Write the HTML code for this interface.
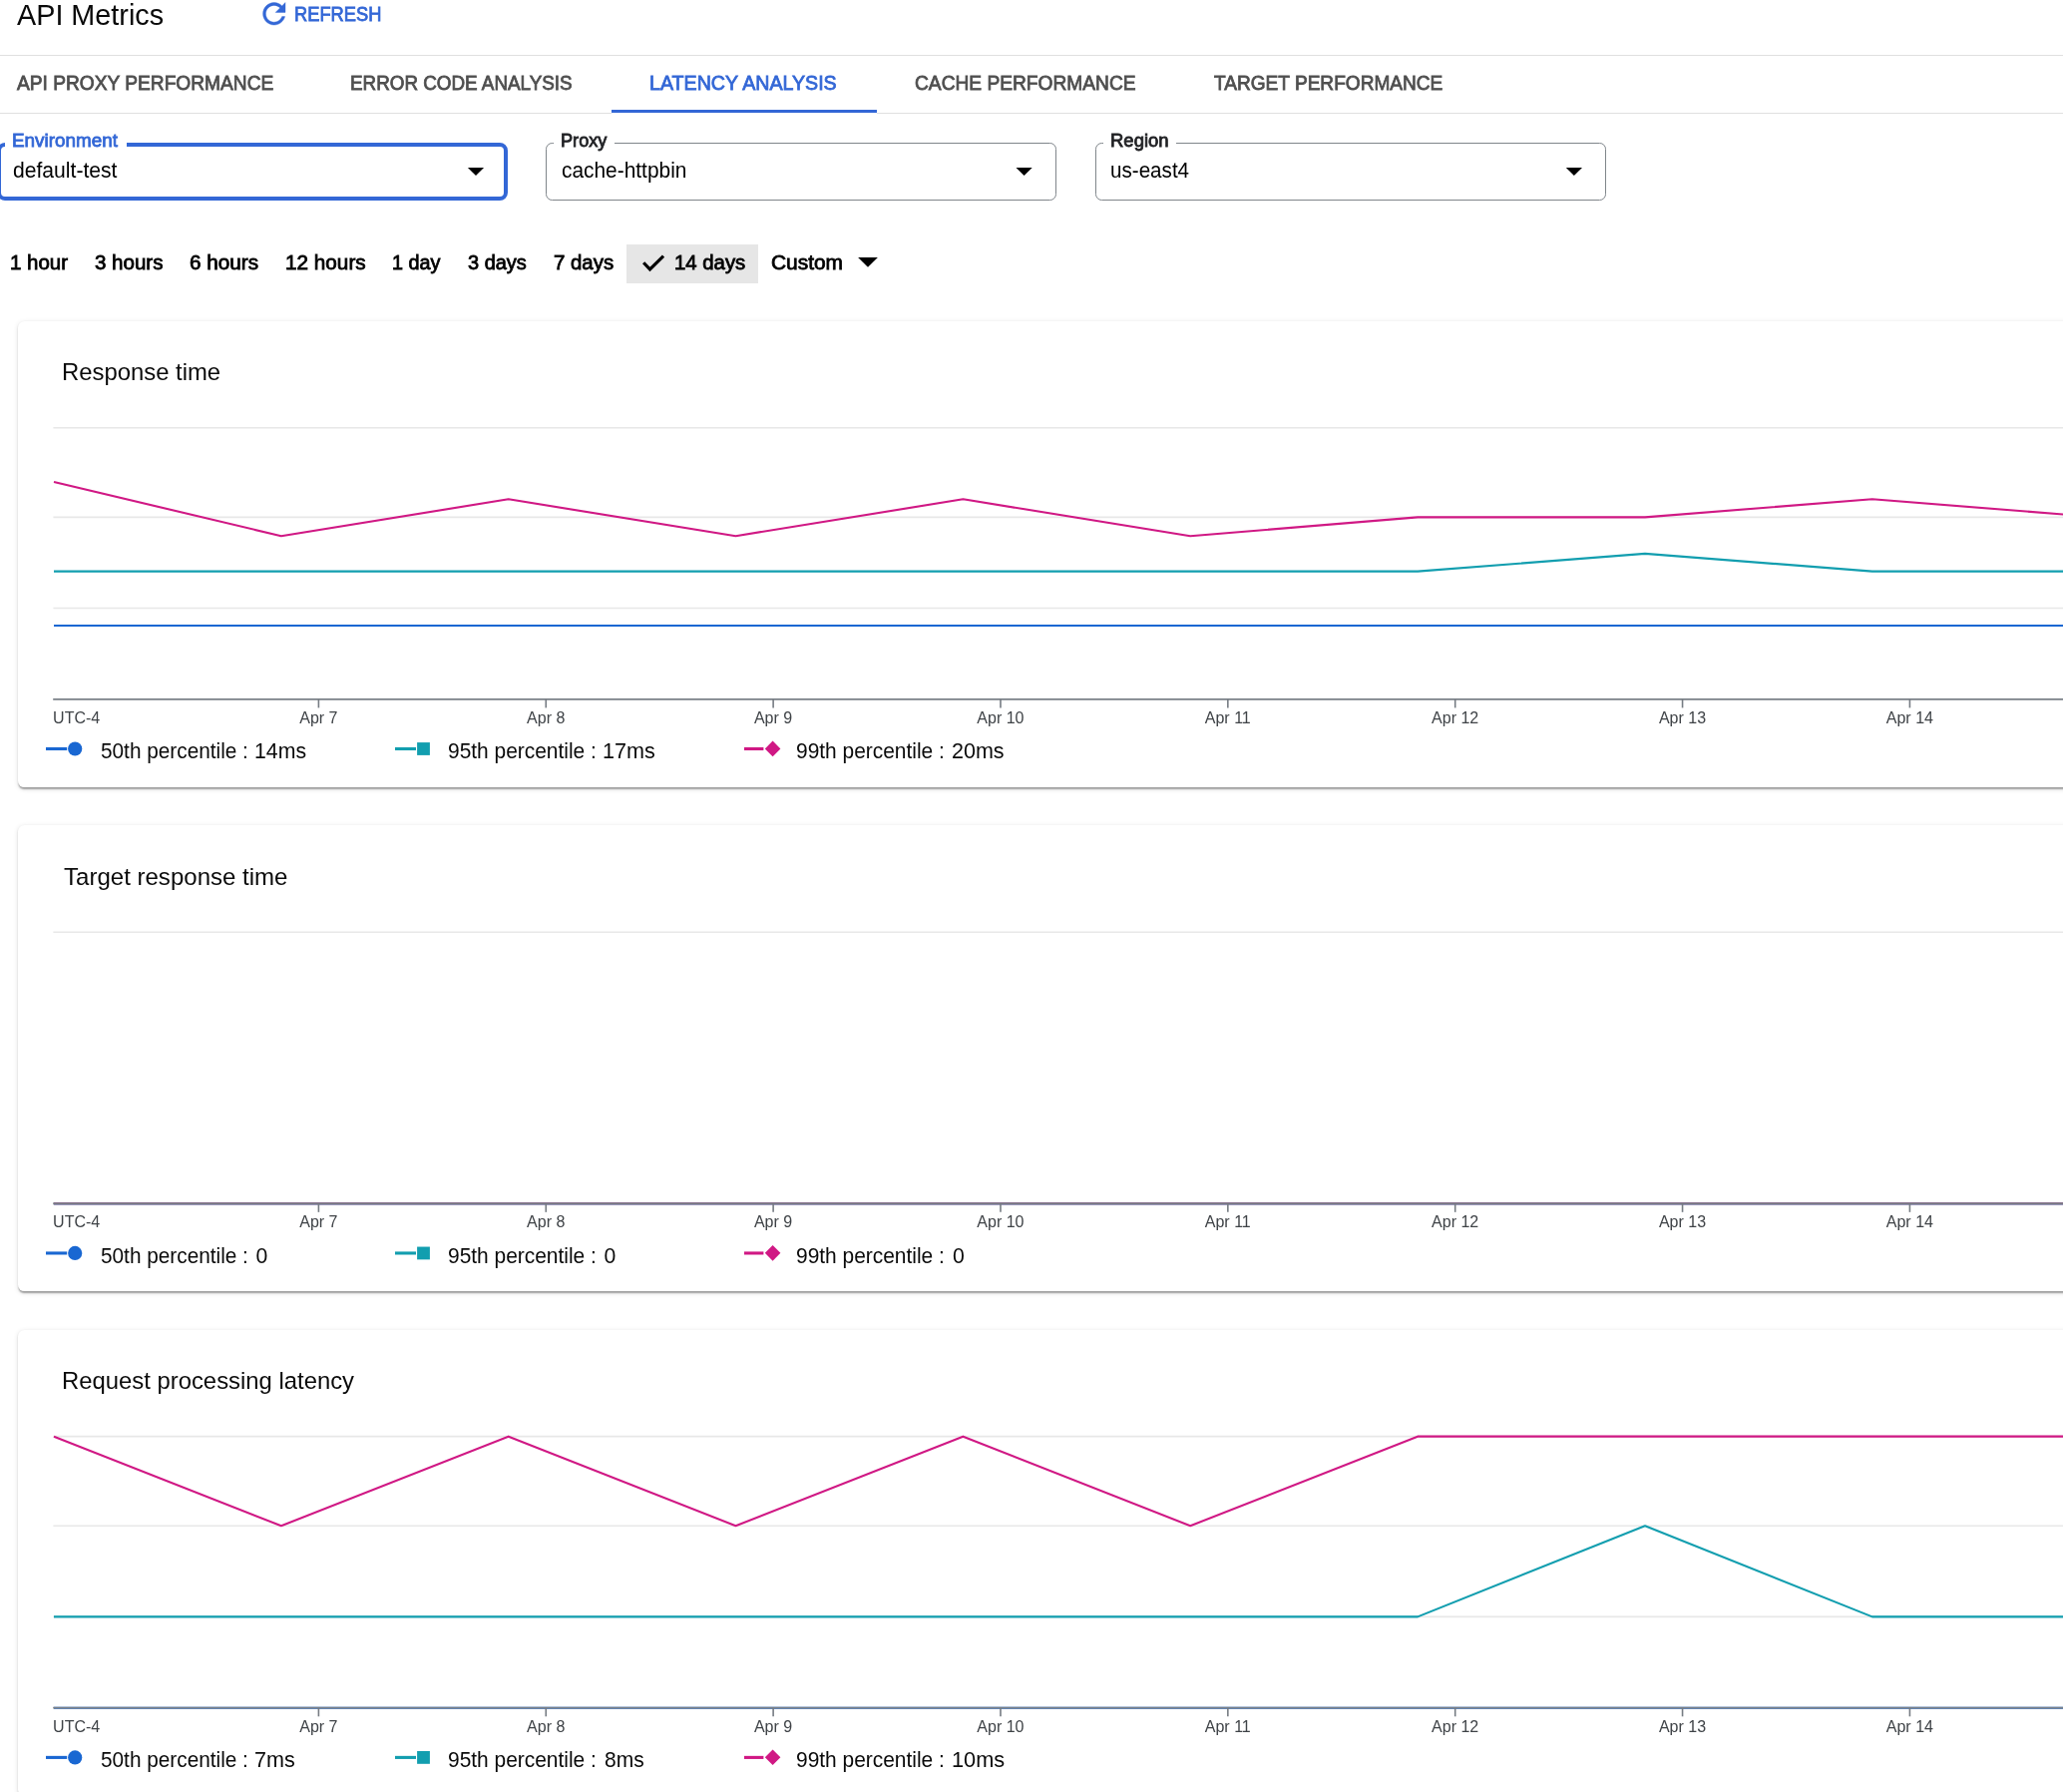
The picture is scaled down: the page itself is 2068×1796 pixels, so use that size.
<!DOCTYPE html>
<html lang="en"><head><meta charset="utf-8"><title>API Metrics</title>
<style>
html,body{margin:0;padding:0;background:#fff}
body{width:2068px;height:1796px;position:relative;overflow:hidden;font-family:"Liberation Sans",sans-serif}
.t{position:absolute;white-space:pre;line-height:1;transform-origin:0 0;display:block}
.txt{position:absolute;left:0;top:0;width:2068px;height:1796px;will-change:transform}
.m{-webkit-text-stroke:0.8px currentColor}
.hr{position:absolute;left:0;width:2068px;height:1px;background:#e0e0e0}
.ind{position:absolute;left:613px;width:266px;top:110px;height:3px;background:#3367d6;border-bottom:1px solid #fff}
.field{position:absolute;top:143px;height:58px;width:512px;box-sizing:border-box;border:1px solid #80868b;border-radius:6.4px}
.field.focus{border:4px solid #3367d6;border-radius:8px}
.notch{position:absolute;top:141px;height:8px;background:#fff}
.sel{position:absolute;left:628px;top:245px;width:132px;height:39px;background:#e6e6e6}
.card{position:absolute;left:18px;width:2080px;height:467px;background:#fff;border-radius:6.4px;box-shadow:0 3.2px 1.6px -1.6px rgba(0,0,0,.2),0 1.6px 1.6px 0 rgba(0,0,0,.14),0 1.6px 4.8px 0 rgba(0,0,0,.12);margin:0}
.chart{position:absolute;left:0;top:0;overflow:visible}
svg{display:block}
.ov{position:absolute;left:0;top:0;overflow:visible;pointer-events:none}
</style></head><body>
<header>
<div class="hr" style="top:55px"></div>
<svg style="position:absolute;left:257.75px;top:-2.9px" width="33.6" height="33.6" viewBox="0 0 24 24"><path fill="#3367d6" stroke="#3367d6" stroke-width="0.3" d="M17.65 6.35C16.2 4.9 14.21 4 12 4c-4.42 0-7.99 3.58-7.99 8s3.57 8 7.99 8c3.73 0 6.84-2.55 7.73-6h-2.08c-.82 2.33-3.04 4-5.65 4-3.31 0-6-2.69-6-6s2.69-6 6-6c1.66 0 3.14.69 4.22 1.78L13 11h7V4l-2.35 2.35z"/></svg>
</header>
<nav>
<div class="hr" style="top:113px"></div>
<div class="ind"></div>
</nav>
<div class="field focus" style="left:-3px"></div>
<div class="field" style="left:547px"></div>
<div class="field" style="left:1098px"></div>
<div class="notch" style="left:5px;width:122px"></div>
<div class="notch" style="left:555px;width:61px"></div>
<div class="notch" style="left:1106px;width:73px"></div>
<div class="sel"></div>
<svg class="ov" width="2068" height="300" viewBox="0 0 2068 300">
<path d="M468.9 168.0H485.1L477.00 176.0Z" fill="#000"/>
<path d="M1018.5 168.0H1034.7L1026.60 176.0Z" fill="#000"/>
<path d="M1569.8 168.0H1586.0L1577.90 176.0Z" fill="#000"/>
<path d="M860.1 258.0H879.9L870.00 267.7Z" fill="#000"/>
<path d="M645.15 263.25L651.5 269.9L665.05 256.6" fill="none" stroke="#000" stroke-width="3.15" stroke-miterlimit="10"/>
</svg>
<section class="card" style="top:322.00px"></section>
<section class="card" style="top:827.45px"></section>
<section class="card" style="top:1332.90px"></section>
<svg class="ov" width="2068" height="1796" viewBox="0 0 2068 1796">
<line x1="53.4" x2="2080.0" y1="428.75" y2="428.75" stroke="#e8e8e8" stroke-width="1.6"/>
<line x1="53.4" x2="2080.0" y1="518.35" y2="518.35" stroke="#e8e8e8" stroke-width="1.6"/>
<line x1="53.4" x2="2080.0" y1="609.45" y2="609.45" stroke="#e8e8e8" stroke-width="1.6"/>
<polyline points="54.0,627.00 281.9,627.00 509.7,627.00 737.5,627.00 965.4,627.00 1193.2,627.00 1421.1,627.00 1649.0,627.00 1876.8,627.00 2104.7,627.00" fill="none" stroke="#1967d2" stroke-width="2.1" stroke-linejoin="round"/>
<polyline points="54.0,572.60 281.9,572.60 509.7,572.60 737.5,572.60 965.4,572.60 1193.2,572.60 1421.1,572.60 1649.0,554.90 1876.8,572.60 2104.7,572.60" fill="none" stroke="#129eaf" stroke-width="2.1" stroke-linejoin="round"/>
<polyline points="54.0,483.00 281.9,537.20 509.7,500.30 737.5,537.20 965.4,500.30 1193.2,537.20 1421.1,518.40 1649.0,518.40 1876.8,500.30 2104.7,518.40" fill="none" stroke="#d01884" stroke-width="2.1" stroke-linejoin="round"/>
<line x1="53.2" x2="2080.0" y1="700.80" y2="700.80" stroke="#7a8087" stroke-width="1.8"/>
<line x1="319.40" x2="319.40" y1="700.80" y2="709.40" stroke="#767c83" stroke-width="1.6"/>
<line x1="547.26" x2="547.26" y1="700.80" y2="709.40" stroke="#767c83" stroke-width="1.6"/>
<line x1="775.12" x2="775.12" y1="700.80" y2="709.40" stroke="#767c83" stroke-width="1.6"/>
<line x1="1002.98" x2="1002.98" y1="700.80" y2="709.40" stroke="#767c83" stroke-width="1.6"/>
<line x1="1230.84" x2="1230.84" y1="700.80" y2="709.40" stroke="#767c83" stroke-width="1.6"/>
<line x1="1458.70" x2="1458.70" y1="700.80" y2="709.40" stroke="#767c83" stroke-width="1.6"/>
<line x1="1686.56" x2="1686.56" y1="700.80" y2="709.40" stroke="#767c83" stroke-width="1.6"/>
<line x1="1914.42" x2="1914.42" y1="700.80" y2="709.40" stroke="#767c83" stroke-width="1.6"/>
<line x1="46.0" x2="67.2" y1="750.50" y2="750.50" stroke="#1967d2" stroke-width="3.1"/>
<circle cx="75.2" cy="750.50" r="7.1" fill="#1967d2"/>
<line x1="396.0" x2="417.0" y1="750.50" y2="750.50" stroke="#129eaf" stroke-width="3.1"/>
<rect x="418.1" y="744.10" width="12.8" height="12.8" fill="#129eaf"/>
<line x1="746.0" x2="765.4" y1="750.50" y2="750.50" stroke="#d01884" stroke-width="3.1"/>
<path d="M766.80 750.40L774.60 742.60L782.40 750.40L774.60 758.20Z" fill="#d01884"/>
<line x1="53.4" x2="2080.0" y1="934.20" y2="934.20" stroke="#e8e8e8" stroke-width="1.6"/>
<polyline points="54.0,1206.25 281.9,1206.25 509.7,1206.25 737.5,1206.25 965.4,1206.25 1193.2,1206.25 1421.1,1206.25 1649.0,1206.25 1876.8,1206.25 2104.7,1206.25" fill="none" stroke="#1967d2" stroke-width="2.1" stroke-linejoin="round"/>
<polyline points="54.0,1206.25 281.9,1206.25 509.7,1206.25 737.5,1206.25 965.4,1206.25 1193.2,1206.25 1421.1,1206.25 1649.0,1206.25 1876.8,1206.25 2104.7,1206.25" fill="none" stroke="#129eaf" stroke-width="2.1" stroke-linejoin="round"/>
<polyline points="54.0,1206.25 281.9,1206.25 509.7,1206.25 737.5,1206.25 965.4,1206.25 1193.2,1206.25 1421.1,1206.25 1649.0,1206.25 1876.8,1206.25 2104.7,1206.25" fill="none" stroke="#d01884" stroke-width="2.1" stroke-linejoin="round"/>
<line x1="53.2" x2="2080.0" y1="1206.25" y2="1206.25" stroke="#7a8087" stroke-width="1.8"/>
<line x1="319.40" x2="319.40" y1="1206.25" y2="1214.85" stroke="#767c83" stroke-width="1.6"/>
<line x1="547.26" x2="547.26" y1="1206.25" y2="1214.85" stroke="#767c83" stroke-width="1.6"/>
<line x1="775.12" x2="775.12" y1="1206.25" y2="1214.85" stroke="#767c83" stroke-width="1.6"/>
<line x1="1002.98" x2="1002.98" y1="1206.25" y2="1214.85" stroke="#767c83" stroke-width="1.6"/>
<line x1="1230.84" x2="1230.84" y1="1206.25" y2="1214.85" stroke="#767c83" stroke-width="1.6"/>
<line x1="1458.70" x2="1458.70" y1="1206.25" y2="1214.85" stroke="#767c83" stroke-width="1.6"/>
<line x1="1686.56" x2="1686.56" y1="1206.25" y2="1214.85" stroke="#767c83" stroke-width="1.6"/>
<line x1="1914.42" x2="1914.42" y1="1206.25" y2="1214.85" stroke="#767c83" stroke-width="1.6"/>
<line x1="46.0" x2="67.2" y1="1255.95" y2="1255.95" stroke="#1967d2" stroke-width="3.1"/>
<circle cx="75.2" cy="1255.95" r="7.1" fill="#1967d2"/>
<line x1="396.0" x2="417.0" y1="1255.95" y2="1255.95" stroke="#129eaf" stroke-width="3.1"/>
<rect x="418.1" y="1249.55" width="12.8" height="12.8" fill="#129eaf"/>
<line x1="746.0" x2="765.4" y1="1255.95" y2="1255.95" stroke="#d01884" stroke-width="3.1"/>
<path d="M766.80 1255.85L774.60 1248.05L782.40 1255.85L774.60 1263.65Z" fill="#d01884"/>
<line x1="53.4" x2="2080.0" y1="1439.65" y2="1439.65" stroke="#e8e8e8" stroke-width="1.6"/>
<line x1="53.4" x2="2080.0" y1="1529.25" y2="1529.25" stroke="#e8e8e8" stroke-width="1.6"/>
<line x1="53.4" x2="2080.0" y1="1620.35" y2="1620.35" stroke="#e8e8e8" stroke-width="1.6"/>
<polyline points="54.0,1711.70 281.9,1711.70 509.7,1711.70 737.5,1711.70 965.4,1711.70 1193.2,1711.70 1421.1,1711.70 1649.0,1711.70 1876.8,1711.70 2104.7,1711.70" fill="none" stroke="#1967d2" stroke-width="2.1" stroke-linejoin="round"/>
<polyline points="54.0,1620.35 281.9,1620.35 509.7,1620.35 737.5,1620.35 965.4,1620.35 1193.2,1620.35 1421.1,1620.35 1649.0,1529.25 1876.8,1620.35 2104.7,1620.35" fill="none" stroke="#129eaf" stroke-width="2.1" stroke-linejoin="round"/>
<polyline points="54.0,1439.65 281.9,1529.25 509.7,1439.65 737.5,1529.25 965.4,1439.65 1193.2,1529.25 1421.1,1439.65 1649.0,1439.65 1876.8,1439.65 2104.7,1439.65" fill="none" stroke="#d01884" stroke-width="2.1" stroke-linejoin="round"/>
<line x1="53.2" x2="2080.0" y1="1711.70" y2="1711.70" stroke="#7a8087" stroke-width="1.8"/>
<line x1="319.40" x2="319.40" y1="1711.70" y2="1720.30" stroke="#767c83" stroke-width="1.6"/>
<line x1="547.26" x2="547.26" y1="1711.70" y2="1720.30" stroke="#767c83" stroke-width="1.6"/>
<line x1="775.12" x2="775.12" y1="1711.70" y2="1720.30" stroke="#767c83" stroke-width="1.6"/>
<line x1="1002.98" x2="1002.98" y1="1711.70" y2="1720.30" stroke="#767c83" stroke-width="1.6"/>
<line x1="1230.84" x2="1230.84" y1="1711.70" y2="1720.30" stroke="#767c83" stroke-width="1.6"/>
<line x1="1458.70" x2="1458.70" y1="1711.70" y2="1720.30" stroke="#767c83" stroke-width="1.6"/>
<line x1="1686.56" x2="1686.56" y1="1711.70" y2="1720.30" stroke="#767c83" stroke-width="1.6"/>
<line x1="1914.42" x2="1914.42" y1="1711.70" y2="1720.30" stroke="#767c83" stroke-width="1.6"/>
<line x1="46.0" x2="67.2" y1="1761.40" y2="1761.40" stroke="#1967d2" stroke-width="3.1"/>
<circle cx="75.2" cy="1761.40" r="7.1" fill="#1967d2"/>
<line x1="396.0" x2="417.0" y1="1761.40" y2="1761.40" stroke="#129eaf" stroke-width="3.1"/>
<rect x="418.1" y="1755.00" width="12.8" height="12.8" fill="#129eaf"/>
<line x1="746.0" x2="765.4" y1="1761.40" y2="1761.40" stroke="#d01884" stroke-width="3.1"/>
<path d="M766.80 1761.30L774.60 1753.50L782.40 1761.30L774.60 1769.10Z" fill="#d01884"/>
</svg>
<div class="txt">
<span class="t" style="left:17.10px;top:0px;font-size:29.38px;color:#0a0a0a;transform:scaleX(0.9794)">API Metrics</span>
<span class="t m" style="left:294.90px;top:4px;font-size:20.28px;color:#3367d6;transform:scaleX(0.9023)">REFRESH</span>
<span class="t m" style="left:16.90px;top:73px;font-size:20.28px;color:#4f4f4f;transform:scaleX(0.9453)">API PROXY PERFORMANCE</span>
<span class="t m" style="left:351.17px;top:73px;font-size:20.28px;color:#4f4f4f;transform:scaleX(0.9293)">ERROR CODE ANALYSIS</span>
<span class="t m" style="left:651.43px;top:73px;font-size:20.28px;color:#3367d6;transform:scaleX(0.9690)">LATENCY ANALYSIS</span>
<span class="t m" style="left:917.45px;top:73px;font-size:20.28px;color:#4f4f4f;transform:scaleX(0.9459)">CACHE PERFORMANCE</span>
<span class="t m" style="left:1216.90px;top:73px;font-size:20.28px;color:#4f4f4f;transform:scaleX(0.9415)">TARGET PERFORMANCE</span>
<span class="t m" style="left:11.99px;top:132px;font-size:18.72px;color:#3367d6;transform:scaleX(1.0086)">Environment</span>
<span class="t" style="left:13.20px;top:160px;font-size:21.22px;color:#000;transform:scaleX(0.9954)">default-test</span>
<span class="t m" style="left:562.13px;top:132px;font-size:18.72px;color:#202124;transform:scaleX(0.9714)">Proxy</span>
<span class="t" style="left:563.10px;top:160px;font-size:21.22px;color:#000;transform:scaleX(0.9842)">cache-httpbin</span>
<span class="t m" style="left:1113.11px;top:132px;font-size:18.72px;color:#202124;transform:scaleX(0.9885)">Region</span>
<span class="t" style="left:1113.43px;top:160px;font-size:21.22px;color:#000;transform:scaleX(0.9717)">us-east4</span>
<span class="t m" style="left:10.09px;top:253px;font-size:20.28px;color:#000;transform:scaleX(1.0086)">1 hour</span>
<span class="t m" style="left:95.20px;top:253px;font-size:20.28px;color:#000;transform:scaleX(1.0124)">3 hours</span>
<span class="t m" style="left:189.98px;top:253px;font-size:20.28px;color:#000;transform:scaleX(1.0216)">6 hours</span>
<span class="t m" style="left:285.88px;top:253px;font-size:20.28px;color:#000;transform:scaleX(1.0227)">12 hours</span>
<span class="t m" style="left:392.92px;top:253px;font-size:20.28px;color:#000;transform:scaleX(0.9769)">1 day</span>
<span class="t m" style="left:469.40px;top:253px;font-size:20.28px;color:#000;transform:scaleX(0.9853)">3 days</span>
<span class="t m" style="left:554.59px;top:253px;font-size:20.28px;color:#000;transform:scaleX(1.0072)">7 days</span>
<span class="t m" style="left:675.70px;top:253px;font-size:20.28px;color:#000;transform:scaleX(1.0036)">14 days</span>
<span class="t m" style="left:773.07px;top:253px;font-size:20.28px;color:#000;transform:scaleX(1.0318)">Custom</span>
<span class="t" style="left:61.65px;top:361px;font-size:24.48px;color:#0a0a0a;transform:scaleX(0.9751)">Response time</span>
<span class="t" style="left:53.10px;top:712px;font-size:16.0px;color:#3f4347">UTC-4</span>
<span class="t" style="left:300.23px;top:712px;font-size:16.0px;color:#3f4347">Apr 7</span>
<span class="t" style="left:528.09px;top:712px;font-size:16.0px;color:#3f4347">Apr 8</span>
<span class="t" style="left:755.95px;top:712px;font-size:16.0px;color:#3f4347">Apr 9</span>
<span class="t" style="left:979.36px;top:712px;font-size:16.0px;color:#3f4347">Apr 10</span>
<span class="t" style="left:1207.81px;top:712px;font-size:16.0px;color:#3f4347">Apr 11</span>
<span class="t" style="left:1435.08px;top:712px;font-size:16.0px;color:#3f4347">Apr 12</span>
<span class="t" style="left:1662.94px;top:712px;font-size:16.0px;color:#3f4347">Apr 13</span>
<span class="t" style="left:1890.80px;top:712px;font-size:16.0px;color:#3f4347">Apr 14</span>
<span class="t" style="left:100.70px;top:742px;font-size:21.22px;color:#0a0a0a;transform:scaleX(0.9793)">50th percentile :</span>
<span class="t" style="left:255.40px;top:742px;font-size:21.22px;color:#0a0a0a;transform:scaleX(1.0024)">14ms</span>
<span class="t" style="left:448.81px;top:742px;font-size:21.22px;color:#0a0a0a;transform:scaleX(0.9859)">95th percentile :</span>
<span class="t" style="left:604.48px;top:742px;font-size:21.22px;color:#0a0a0a;transform:scaleX(1.0184)">17ms</span>
<span class="t" style="left:798.31px;top:742px;font-size:21.22px;color:#0a0a0a;transform:scaleX(0.9859)">99th percentile :</span>
<span class="t" style="left:953.99px;top:742px;font-size:21.22px;color:#0a0a0a;transform:scaleX(1.0144)">20ms</span>
<span class="t" style="left:63.60px;top:867px;font-size:24.48px;color:#0a0a0a;transform:scaleX(0.9825)">Target response time</span>
<span class="t" style="left:53.10px;top:1217px;font-size:16.0px;color:#3f4347">UTC-4</span>
<span class="t" style="left:300.23px;top:1217px;font-size:16.0px;color:#3f4347">Apr 7</span>
<span class="t" style="left:528.09px;top:1217px;font-size:16.0px;color:#3f4347">Apr 8</span>
<span class="t" style="left:755.95px;top:1217px;font-size:16.0px;color:#3f4347">Apr 9</span>
<span class="t" style="left:979.36px;top:1217px;font-size:16.0px;color:#3f4347">Apr 10</span>
<span class="t" style="left:1207.81px;top:1217px;font-size:16.0px;color:#3f4347">Apr 11</span>
<span class="t" style="left:1435.08px;top:1217px;font-size:16.0px;color:#3f4347">Apr 12</span>
<span class="t" style="left:1662.94px;top:1217px;font-size:16.0px;color:#3f4347">Apr 13</span>
<span class="t" style="left:1890.80px;top:1217px;font-size:16.0px;color:#3f4347">Apr 14</span>
<span class="t" style="left:100.70px;top:1248px;font-size:21.22px;color:#0a0a0a;transform:scaleX(0.9793)">50th percentile :</span>
<span class="t" style="left:256.40px;top:1248px;font-size:21.22px;color:#0a0a0a">0</span>
<span class="t" style="left:448.81px;top:1248px;font-size:21.22px;color:#0a0a0a;transform:scaleX(0.9859)">95th percentile :</span>
<span class="t" style="left:605.50px;top:1248px;font-size:21.22px;color:#0a0a0a">0</span>
<span class="t" style="left:798.31px;top:1248px;font-size:21.22px;color:#0a0a0a;transform:scaleX(0.9859)">99th percentile :</span>
<span class="t" style="left:955.00px;top:1248px;font-size:21.22px;color:#0a0a0a">0</span>
<span class="t" style="left:61.65px;top:1372px;font-size:24.48px;color:#0a0a0a;transform:scaleX(0.9748)">Request processing latency</span>
<span class="t" style="left:53.10px;top:1723px;font-size:16.0px;color:#3f4347">UTC-4</span>
<span class="t" style="left:300.23px;top:1723px;font-size:16.0px;color:#3f4347">Apr 7</span>
<span class="t" style="left:528.09px;top:1723px;font-size:16.0px;color:#3f4347">Apr 8</span>
<span class="t" style="left:755.95px;top:1723px;font-size:16.0px;color:#3f4347">Apr 9</span>
<span class="t" style="left:979.36px;top:1723px;font-size:16.0px;color:#3f4347">Apr 10</span>
<span class="t" style="left:1207.81px;top:1723px;font-size:16.0px;color:#3f4347">Apr 11</span>
<span class="t" style="left:1435.08px;top:1723px;font-size:16.0px;color:#3f4347">Apr 12</span>
<span class="t" style="left:1662.94px;top:1723px;font-size:16.0px;color:#3f4347">Apr 13</span>
<span class="t" style="left:1890.80px;top:1723px;font-size:16.0px;color:#3f4347">Apr 14</span>
<span class="t" style="left:100.70px;top:1753px;font-size:21.22px;color:#0a0a0a;transform:scaleX(0.9793)">50th percentile :</span>
<span class="t" style="left:255.38px;top:1753px;font-size:21.22px;color:#0a0a0a;transform:scaleX(1.0162)">7ms</span>
<span class="t" style="left:448.81px;top:1753px;font-size:21.22px;color:#0a0a0a;transform:scaleX(0.9859)">95th percentile :</span>
<span class="t" style="left:605.50px;top:1753px;font-size:21.22px;color:#0a0a0a;transform:scaleX(0.9905)">8ms</span>
<span class="t" style="left:798.31px;top:1753px;font-size:21.22px;color:#0a0a0a;transform:scaleX(0.9859)">99th percentile :</span>
<span class="t" style="left:953.98px;top:1753px;font-size:21.22px;color:#0a0a0a;transform:scaleX(1.0243)">10ms</span>
</div>
</body></html>
